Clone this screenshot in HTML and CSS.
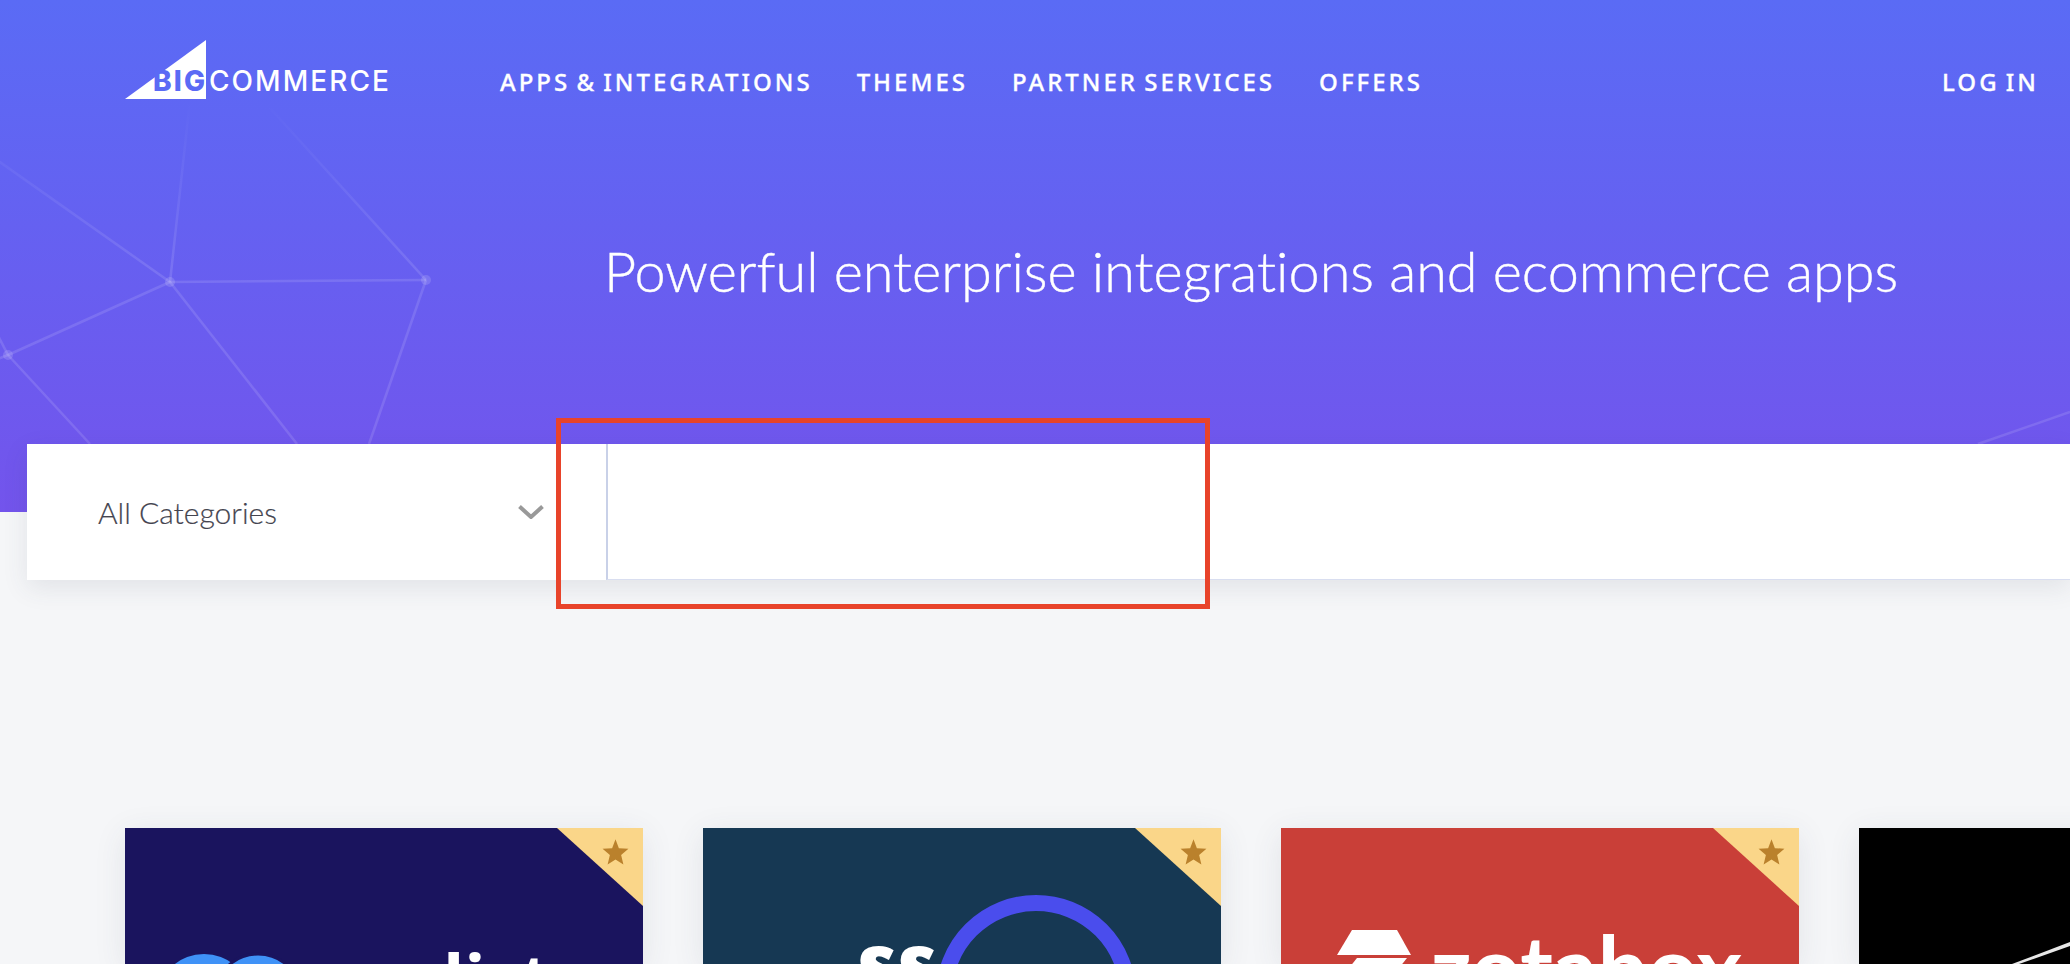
FILE: index.html
```html
<!DOCTYPE html>
<html lang="en">
<head>
  <meta charset="UTF-8">
  <meta name="viewport" content="width=device-width, initial-scale=1.0">
  <title>Apps Marketplace</title>
  <link rel="stylesheet" href="styles.css">
</head>
<body>
  <section class="hero">
    <!-- network lines behind the hero -->
    <svg class="hero-lines" viewBox="0 0 2070 512" width="2070" height="512">
      <defs>
        <linearGradient id="fade" gradientUnits="userSpaceOnUse" x1="0" y1="100" x2="0" y2="270">
          <stop offset="0" stop-color="#fff" stop-opacity="0"/>
          <stop offset="1" stop-color="#fff" stop-opacity="0.12"/>
        </linearGradient>
      </defs>
      <g stroke="url(#fade)" stroke-width="2.5" fill="none">
        <path d="M170 282 L426 280"/>
        <path d="M170 282 L8 355"/>
        <path d="M170 282 L190 100"/>
        <path d="M170 282 L-20 148"/>
        <path d="M170 282 L297 444"/>
        <path d="M426 280 L270 108"/>
        <path d="M426 280 L369 444"/>
        <path d="M8 355 L90 444"/>
        <path d="M8 355 L-10 320"/>
        <path d="M8 355 L-10 362"/>
        <path d="M1978 444 L2070 412"/>
      </g>
      <g fill="#fff" fill-opacity="0.14">
        <circle cx="170" cy="282" r="5"/>
        <circle cx="426" cy="280" r="5"/>
        <circle cx="8" cy="355" r="5"/>
      </g>
    </svg>

    <header class="topbar">
      <svg class="logo" viewBox="0 0 266 60" width="266" height="60">
        <path d="M0 59 L81 0 V59 Z" fill="#fff"/>
        <text class="logo-big" x="28" y="51" textLength="52">BIG</text>
        <text class="logo-commerce" x="84" y="51" textLength="180">COMMERCE</text>
      </svg>
      <nav class="nav">
        <a href="#">APPS &amp; INTEGRATIONS</a>
        <a href="#">THEMES</a>
        <a href="#">PARTNER SERVICES</a>
        <a href="#">OFFERS</a>
      </nav>
      <a class="login" href="#">LOG IN</a>
    </header>

    <h1>Powerful enterprise integrations and ecommerce apps</h1>
  </section>

  <div class="search">
    <div class="category">
      <span>All Categories</span>
      <svg class="chevron" viewBox="0 0 26 14" width="26" height="14">
        <path d="M1.5 1.5 L13 12 L24.5 1.5" fill="none" stroke="#999" stroke-width="4"/>
      </svg>
    </div>
    <div class="search-input"></div>
  </div>

  <section class="cards">
    <article class="card card-blue">
      <div class="ribbon"><svg viewBox="0 0 24 24" width="27" height="27"><path d="M12 1 L15 9 L23.500 9.500 L17 15 L19 23.500 L12 19 L5 23.500 L7 15 L0.500 9.500 L9 9 Z"/></svg></div>
      <svg class="art" viewBox="0 0 518 136" width="518" height="136">
        <ellipse cx="79" cy="166" rx="44" ry="40" fill="#3f92f7"/>
        <ellipse cx="133" cy="166" rx="42" ry="40" fill="#3f92f7" stroke="#1a145e" stroke-width="3"/>
        <text class="art-list" x="318" y="177">list</text>
      </svg>
    </article>

    <article class="card card-navy">
      <div class="ribbon"><svg viewBox="0 0 24 24" width="27" height="27"><path d="M12 1 L15 9 L23.500 9.500 L17 15 L19 23.500 L12 19 L5 23.500 L7 15 L0.500 9.500 L9 9 Z"/></svg></div>
      <svg class="art" viewBox="0 0 518 136" width="518" height="136">
        <circle cx="333" cy="167" r="92" fill="none" stroke="#4a4ded" stroke-width="16"/>
        <text class="art-ss" x="152" y="163">ss</text>
      </svg>
    </article>

    <article class="card card-red">
      <div class="ribbon"><svg viewBox="0 0 24 24" width="27" height="27"><path d="M12 1 L15 9 L23.500 9.500 L17 15 L19 23.500 L12 19 L5 23.500 L7 15 L0.500 9.500 L9 9 Z"/></svg></div>
      <svg class="art" viewBox="0 0 518 136" width="518" height="136">
        <path d="M71 102 H116 L130 127 H56 Z" fill="#fff"/>
        <path d="M76 130 H126 L118 140 H68 Z" fill="#fff"/>
        <text class="art-zotabox" x="150" y="172">zotabox</text>
      </svg>
    </article>

    <article class="card card-black">
      <svg class="art" viewBox="0 0 518 136" width="518" height="136">
        <path d="M153 136 L211 114 V118 L160 136 Z" fill="#e8e8e8"/>
      </svg>
    </article>
  </section>

  <div class="highlight"></div>
</body>
</html>
```

FILE: styles.css
```css
body {
  font-family: "Lato", "Noto Sans", sans-serif;
  margin: 0;
  height: 964px;
  overflow: hidden;
  position: relative;
  background-color: #f5f6f8;
}

.hero {
  position: relative;
  height: 512px;
  background: linear-gradient(180deg, #5a6bf5 0%, #7354ec 100%);
  color: #fff;
}

.hero-lines {
  position: absolute;
  top: 0;
  left: 0;
}

.topbar {
  position: relative;
  display: flex;
  align-items: center;
  height: 60px;
  padding: 40px 31px 0 125px;
}

.logo-big {
  font-family: "Inter", sans-serif;
  font-weight: 800;
  font-size: 28px;
  fill: #5b6af5;
}

.logo-commerce {
  font-family: "Inter", sans-serif;
  font-weight: 500;
  font-size: 28px;
  fill: #fff;
}

.nav {
  display: flex;
  gap: 44px;
  margin: 22px 0 0 109px;
}

.nav a,
.login {
  font-family: "Noto Sans", sans-serif;
  font-weight: 500;
  font-size: 24px;
  letter-spacing: 3px;
  word-spacing: -3px;
  -webkit-text-stroke: 0.3px #fff;
  color: #fff;
  text-decoration: none;
}

.login {
  margin: 22px 0 0 auto;
}

h1 {
  position: relative;
  margin: 139px 0 0 604px;
  font-weight: 300;
  font-size: 55.8px;
  line-height: 64px;
  font-variant-ligatures: none;
  -webkit-text-stroke: 0.4px #fff;
  white-space: nowrap;
}

.search {
  position: relative;
  display: flex;
  height: 136px;
  margin: -68px 0 0 27px;
  background-color: #fff;
  box-shadow: 0 8px 24px rgba(60, 64, 90, 0.1);
}

.category {
  display: flex;
  align-items: center;
  justify-content: space-between;
  width: 579px;
  box-sizing: border-box;
  padding: 0 62px 0 71px;
  font-size: 30px;
  font-weight: 300;
  color: #44444f;
  -webkit-text-stroke: 0.2px #44444f;
}

.search-input {
  flex: 1;
  border-left: 2px solid #c9d1e8;
  border-bottom: 1px solid #d9def0;
}

.cards {
  display: flex;
  gap: 60px;
  margin-top: 248px;
  padding-left: 125px;
}

.card {
  position: relative;
  flex-shrink: 0;
  width: 518px;
  height: 136px;
  box-shadow: 0 6px 30px rgba(60, 64, 90, 0.1);
  overflow: hidden;
}

.card-blue { background-color: #1a145e; }
.card-navy { background-color: #163853; }
.card-red { background-color: #c93f38; }
.card-black { background-color: #000; }

.ribbon {
  position: absolute;
  top: 0;
  right: 0;
  width: 86px;
  height: 78px;
  background-color: #fad689;
  clip-path: polygon(0 0, 100% 0, 100% 100%);
}

.ribbon svg {
  position: absolute;
  top: 10px;
  right: 14px;
  fill: #ba812c;
}

.art {
  display: block;
}

.art-list {
  font-family: "Open Sans", sans-serif;
  font-weight: 700;
  font-size: 70px;
  fill: #fff;
}

.art-ss {
  font-family: "Open Sans", sans-serif;
  font-style: italic;
  font-weight: 800;
  font-size: 80px;
  fill: #fff;
}

.art-zotabox {
  font-family: "Lato", sans-serif;
  font-weight: 700;
  font-size: 88px;
  fill: #fff;
}

.highlight {
  position: absolute;
  top: 418px;
  left: 556px;
  width: 654px;
  height: 191px;
  box-sizing: border-box;
  border: 5px solid #e8432a;
}
```
